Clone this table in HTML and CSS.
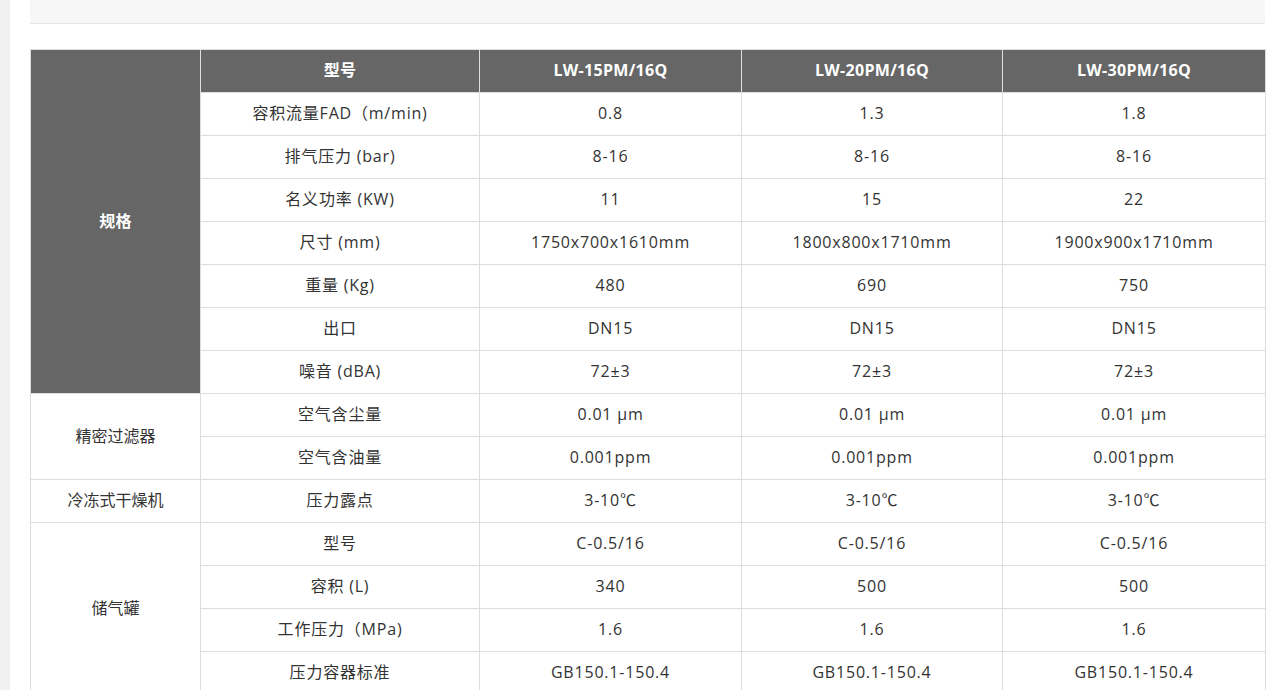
FILE: index.html
```html
<!DOCTYPE html>
<html lang="zh">
<head>
<meta charset="utf-8">
<link rel="stylesheet" href="styles.css">
</head>
<body>
<div class="page">
  <div class="strip"></div>
  <div class="content">
    <div class="topbar"></div>
    <table class="spec">
      <colgroup>
        <col class="c0"><col class="c1"><col class="c2"><col class="c3"><col class="c4">
      </colgroup>
      <tr class="head">
        <td class="group dark" rowspan="8">规格</td>
        <td>型号</td><td>LW-15PM/16Q</td><td>LW-20PM/16Q</td><td>LW-30PM/16Q</td>
      </tr>
      <tr><td>容积流量FAD（m/min)</td><td>0.8</td><td>1.3</td><td>1.8</td></tr>
      <tr><td>排气压力 (bar)</td><td>8-16</td><td>8-16</td><td>8-16</td></tr>
      <tr><td>名义功率 (KW)</td><td>11</td><td>15</td><td>22</td></tr>
      <tr><td>尺寸 (mm)</td><td>1750x700x1610mm</td><td>1800x800x1710mm</td><td>1900x900x1710mm</td></tr>
      <tr><td>重量 (Kg)</td><td>480</td><td>690</td><td>750</td></tr>
      <tr><td>出口</td><td>DN15</td><td>DN15</td><td>DN15</td></tr>
      <tr><td>噪音 (dBA)</td><td>72±3</td><td>72±3</td><td>72±3</td></tr>
      <tr><td class="group" rowspan="2">精密过滤器</td><td>空气含尘量</td><td>0.01 μm</td><td>0.01 μm</td><td>0.01 μm</td></tr>
      <tr><td>空气含油量</td><td>0.001ppm</td><td>0.001ppm</td><td>0.001ppm</td></tr>
      <tr><td class="group">冷冻式干燥机</td><td>压力露点</td><td>3-10℃</td><td>3-10℃</td><td>3-10℃</td></tr>
      <tr><td class="group" rowspan="4">储气罐</td><td>型号</td><td>C-0.5/16</td><td>C-0.5/16</td><td>C-0.5/16</td></tr>
      <tr><td>容积 (L)</td><td>340</td><td>500</td><td>500</td></tr>
      <tr><td>工作压力（MPa)</td><td>1.6</td><td>1.6</td><td>1.6</td></tr>
      <tr><td>压力容器标准</td><td>GB150.1-150.4</td><td>GB150.1-150.4</td><td>GB150.1-150.4</td></tr>
    </table>
  </div>
</div>
</body>
</html>
```
FILE: styles.css
```css
html, body {
  margin: 0;
  padding: 0;
  background: #fff;
}
body {
  font-family: "Open Sans", "Noto Sans CJK SC", sans-serif;
  color: #333;
}
.page {
  display: flex;
  min-height: 690px;
}
.strip {
  width: 10px;
  flex: none;
  background: #f1f1f1;
}
.content {
  padding-left: 20px;
  width: 1235px;
}
.topbar {
  height: 23px;
  background: #f7f7f7;
  border-bottom: 1px solid #e5e5e5;
}
.spec {
  margin-top: 25px;
  border-collapse: collapse;
  table-layout: fixed;
  width: 1235px;
  font-size: 16px;
}
.c0 { width: 170px; }
.c1 { width: 279px; }
.c2 { width: 262px; }
.c3 { width: 261px; }
.c4 { width: 263px; }
.spec td {
  border: 1px solid #dddddd;
  height: 40px;
  padding: 0 0 2px;
  line-height: 20px;
  text-align: center;
  vertical-align: middle;
  letter-spacing: 0.8px;
}
.spec tr.head td,
.spec td.dark {
  background: #666666;
  color: #fff;
  font-weight: 700;
  letter-spacing: 0.3px;
}
.spec td.group {
  letter-spacing: 0;
}
```
